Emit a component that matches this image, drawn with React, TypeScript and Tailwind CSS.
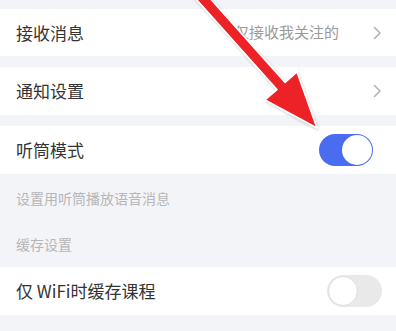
import React from "react";

const font = { fontFamily: '"Noto Sans CJK SC", "Noto Sans", sans-serif' };

function Chevron() {
  return (
    <svg width="9" height="14" viewBox="0 0 9 14" className="shrink-0">
      <path d="M1.5 1.5 L7 7 L1.5 12.5" fill="none" stroke="#b4b4b4" strokeWidth="1.6" strokeLinecap="round" strokeLinejoin="round" />
    </svg>
  );
}

function Toggle({ on }: { on: boolean }) {
  return on ? (
    <div className="w-[54px] h-[32px] rounded-full bg-[#4a6cf0] flex items-center justify-end p-[1px]">
      <div className="w-[30px] h-[30px] rounded-full bg-white" />
    </div>
  ) : (
    <div className="w-[55px] h-[32px] rounded-full bg-[#e9e9ea] flex items-center justify-start p-[1px]">
      <div className="w-[30px] h-[30px] rounded-full bg-white border border-[#dedede]" />
    </div>
  );
}

export default function App() {
  return (
    <div className="relative w-[396px] h-[331px] overflow-hidden bg-[#f3f4f7]" style={font}>
      <div className="h-[9px]" />
      <div className="h-[47px] bg-white flex items-center pl-4 pr-[14px]">
        <span className="text-[17px] text-[#333]">接收消息</span>
        <span className="ml-auto text-[15px] text-[#9a9a9a]">仅接收我关注的</span>
        <span className="ml-[34px]">
          <Chevron />
        </span>
      </div>
      <div className="h-[11px]" />
      <div className="h-[48px] bg-white flex items-center pl-4 pr-[14px]">
        <span className="text-[17px] text-[#333]">通知设置</span>
        <span className="ml-auto">
          <Chevron />
        </span>
      </div>
      <div className="h-[11px]" />
      <div className="h-[48px] bg-white flex items-center pl-4 pr-[23px]">
        <span className="text-[17px] text-[#333]">听筒模式</span>
        <span className="ml-auto">
          <Toggle on />
        </span>
      </div>
      <div className="h-[48px] flex items-center pl-4">
        <span className="text-[14px] text-[#b6b6b8]">设置用听筒播放语音消息</span>
      </div>
      <div className="h-[45px] flex items-center pl-4">
        <span className="text-[14px] text-[#b6b6b8]">缓存设置</span>
      </div>
      <div className="h-[48px] bg-white flex items-center pl-4 pr-[14px]">
        <span className="text-[17px] text-[#333]">仅 WiFi时缓存课程</span>
        <span className="ml-auto">
          <Toggle on={false} />
        </span>
      </div>

      <svg className="absolute left-0 top-0 pointer-events-none" width="396" height="331" viewBox="0 0 396 331">
        <defs>
          <filter id="sh" x="-20%" y="-20%" width="140%" height="140%">
            <feDropShadow dx="0.5" dy="1" stdDeviation="1" floodColor="#000" floodOpacity="0.25" />
          </filter>
        </defs>
        <polygon
          points="180.5,-18.4 276.9,89.6 265,100 317,128 297,72 285.1,82.4 188.7,-25.6"
          fill="#ec2228"
          stroke="#ffffff"
          strokeWidth="1.6"
          strokeLinejoin="round"
          filter="url(#sh)"
        />
      </svg>
    </div>
  );
}
